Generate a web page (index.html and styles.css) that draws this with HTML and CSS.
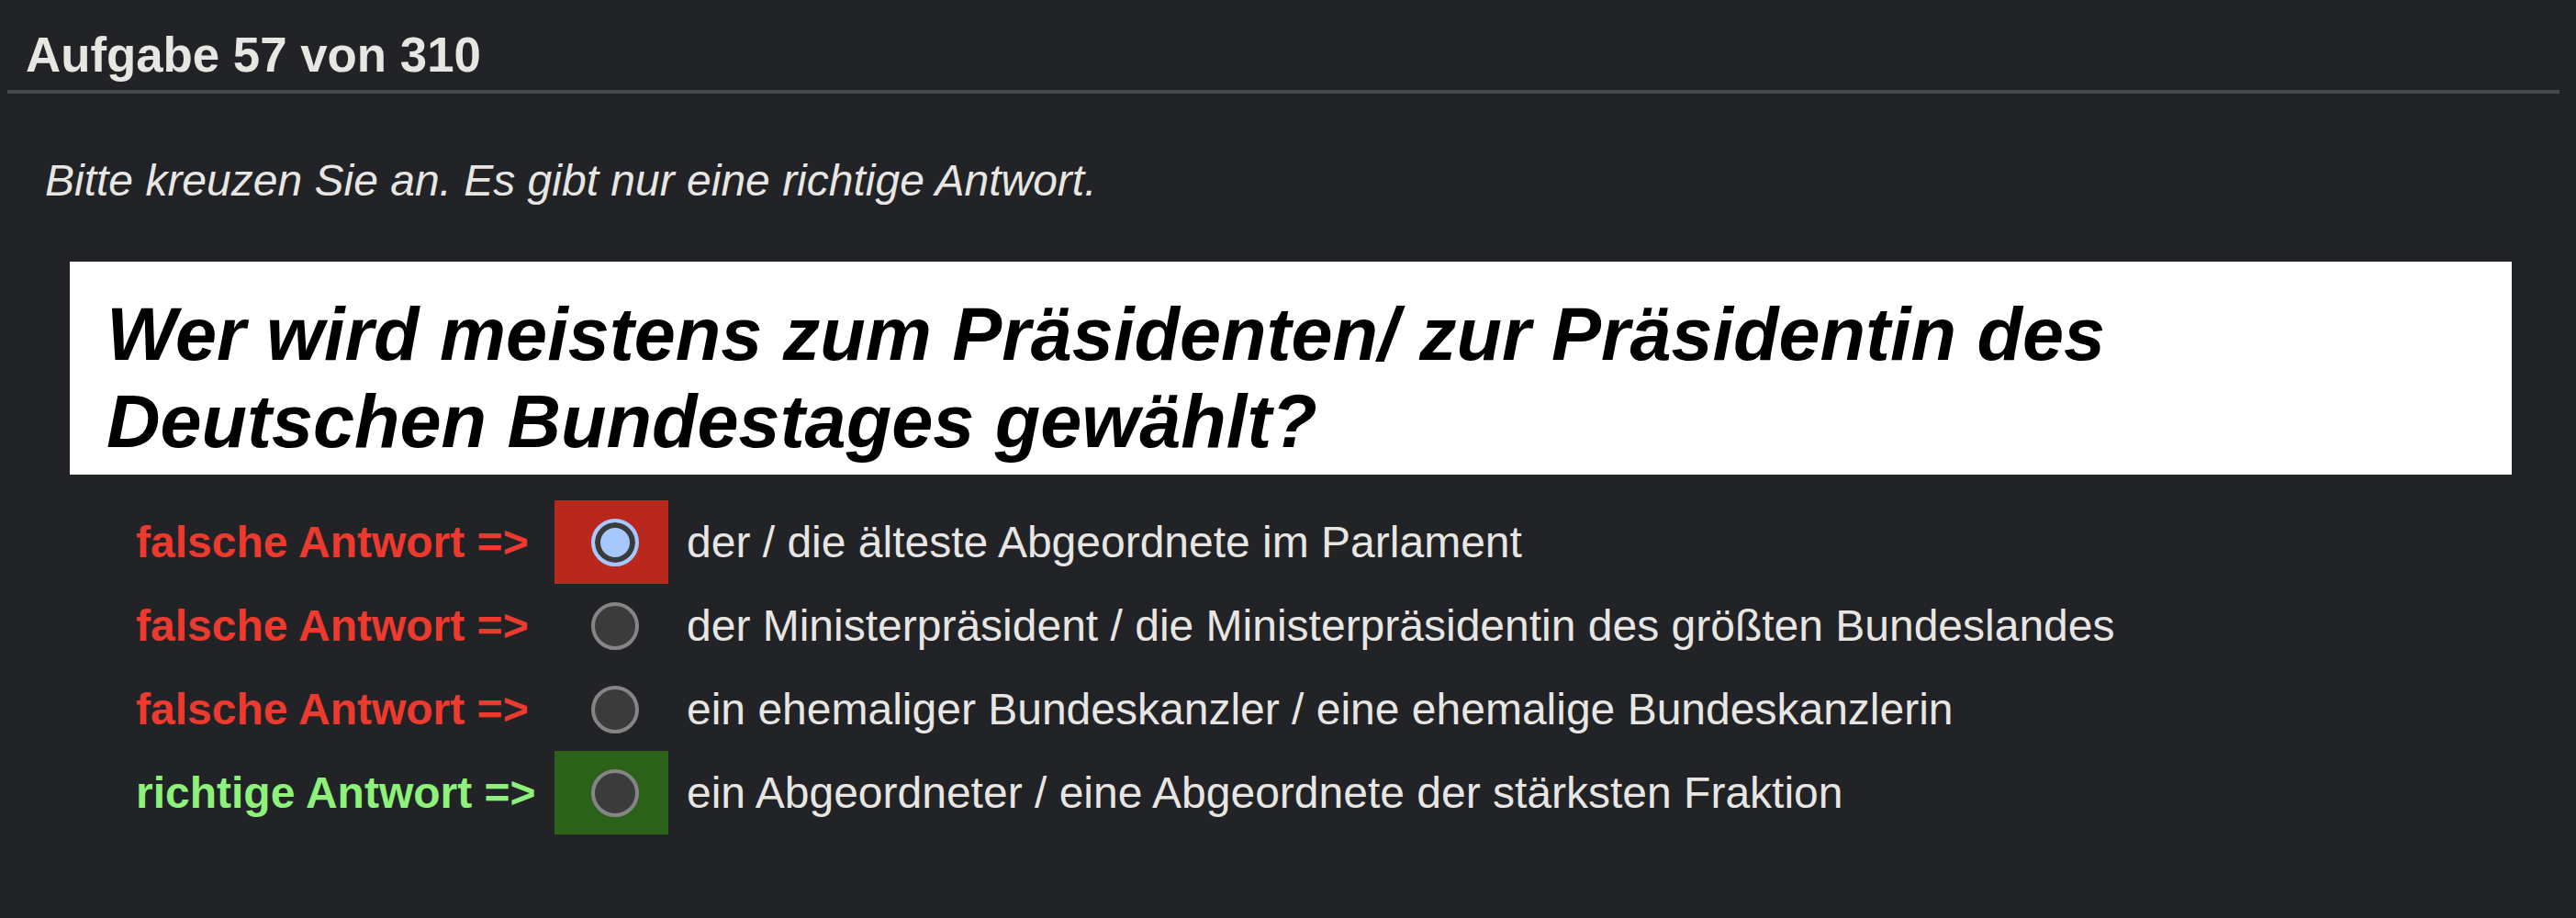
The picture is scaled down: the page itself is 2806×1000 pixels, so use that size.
FILE: index.html
```html
<!DOCTYPE html>
<html lang="de">
<head>
<meta charset="utf-8">
<title>Aufgabe 57 von 310</title>
<link rel="stylesheet" href="styles.css">
</head>
<body>
<div class="page">
  <h1 class="title">Aufgabe 57 von 310</h1>
  <p class="hint">Bitte kreuzen Sie an. Es gibt nur eine richtige Antwort.</p>
  <div class="question">Wer wird meistens zum Präsidenten/ zur Präsidentin des<br>Deutschen Bundestages gewählt?</div>
  <div class="answers">
    <div class="label wrong">falsche Antwort =&gt;</div>
    <div class="cell cell-wrong"><input class="radio" type="radio" name="a" checked></div>
    <div class="text">der / die älteste Abgeordnete im Parlament</div>

    <div class="label wrong">falsche Antwort =&gt;</div>
    <div class="cell"><input class="radio" type="radio" name="a"></div>
    <div class="text">der Ministerpräsident / die Ministerpräsidentin des größten Bundeslandes</div>

    <div class="label wrong">falsche Antwort =&gt;</div>
    <div class="cell"><input class="radio" type="radio" name="a"></div>
    <div class="text">ein ehemaliger Bundeskanzler / eine ehemalige Bundeskanzlerin</div>

    <div class="label right">richtige Antwort =&gt;</div>
    <div class="cell cell-right"><input class="radio" type="radio" name="a"></div>
    <div class="text">ein Abgeordneter / eine Abgeordnete der stärksten Fraktion</div>
  </div>
</div>
</body>
</html>
```

FILE: styles.css
```css
html, body {
  margin: 0;
  padding: 0;
  background: #222326;
}

body {
  font-family: "Liberation Sans", Arial, sans-serif;
  font-size: 48px;
  color: #e8e6e3;
}

.page {
  padding: 8px 18px 0 8px;
}

.title {
  margin: 0;
  padding: 22px 0 8px 20px;
  font-size: 52.8px;
  line-height: 60px;
  font-weight: bold;
  color: #e8e6e3;
  border-bottom: 4px solid #45494c;
}

.hint {
  margin: 67px 0 0 0;
  padding-left: 41px;
  font-style: italic;
  line-height: 55px;
}

.question {
  margin: 61px 0 0 68px;
  width: 2660px;
  box-sizing: border-box;
  padding: 32px 0 10px 40px;
  background: #ffffff;
  color: #000000;
  font-weight: bold;
  font-style: italic;
  font-size: 81px;
  line-height: 95px;
}

.answers {
  margin: 28px 0 0 140px;
  display: grid;
  grid-template-columns: 436px 124px auto;
  grid-auto-rows: 91px;
  column-gap: 20px;
  align-items: center;
  justify-content: start;
}

.label {
  font-weight: bold;
  line-height: 55px;
  white-space: nowrap;
}

.wrong { color: #ec3a2f; }
.right { color: #8ef27a; }

.cell {
  height: 91px;
  display: flex;
  align-items: center;
  padding-left: 40px;
  box-sizing: border-box;
}

.cell-wrong { background: #b9271d; }
.cell-right { background: #2b6119; }

.text {
  line-height: 55px;
  white-space: nowrap;
}

.radio {
  appearance: none;
  -webkit-appearance: none;
  margin: 0;
  width: 52px;
  height: 52px;
  box-sizing: border-box;
  border-radius: 50%;
  border: 4px solid #858585;
  background: #3b3b3b;
}

.radio:checked {
  border-color: #a6c8ff;
  background: #a6c8ff;
  box-shadow: inset 0 0 0 6px #3b3b3b;
}
```
